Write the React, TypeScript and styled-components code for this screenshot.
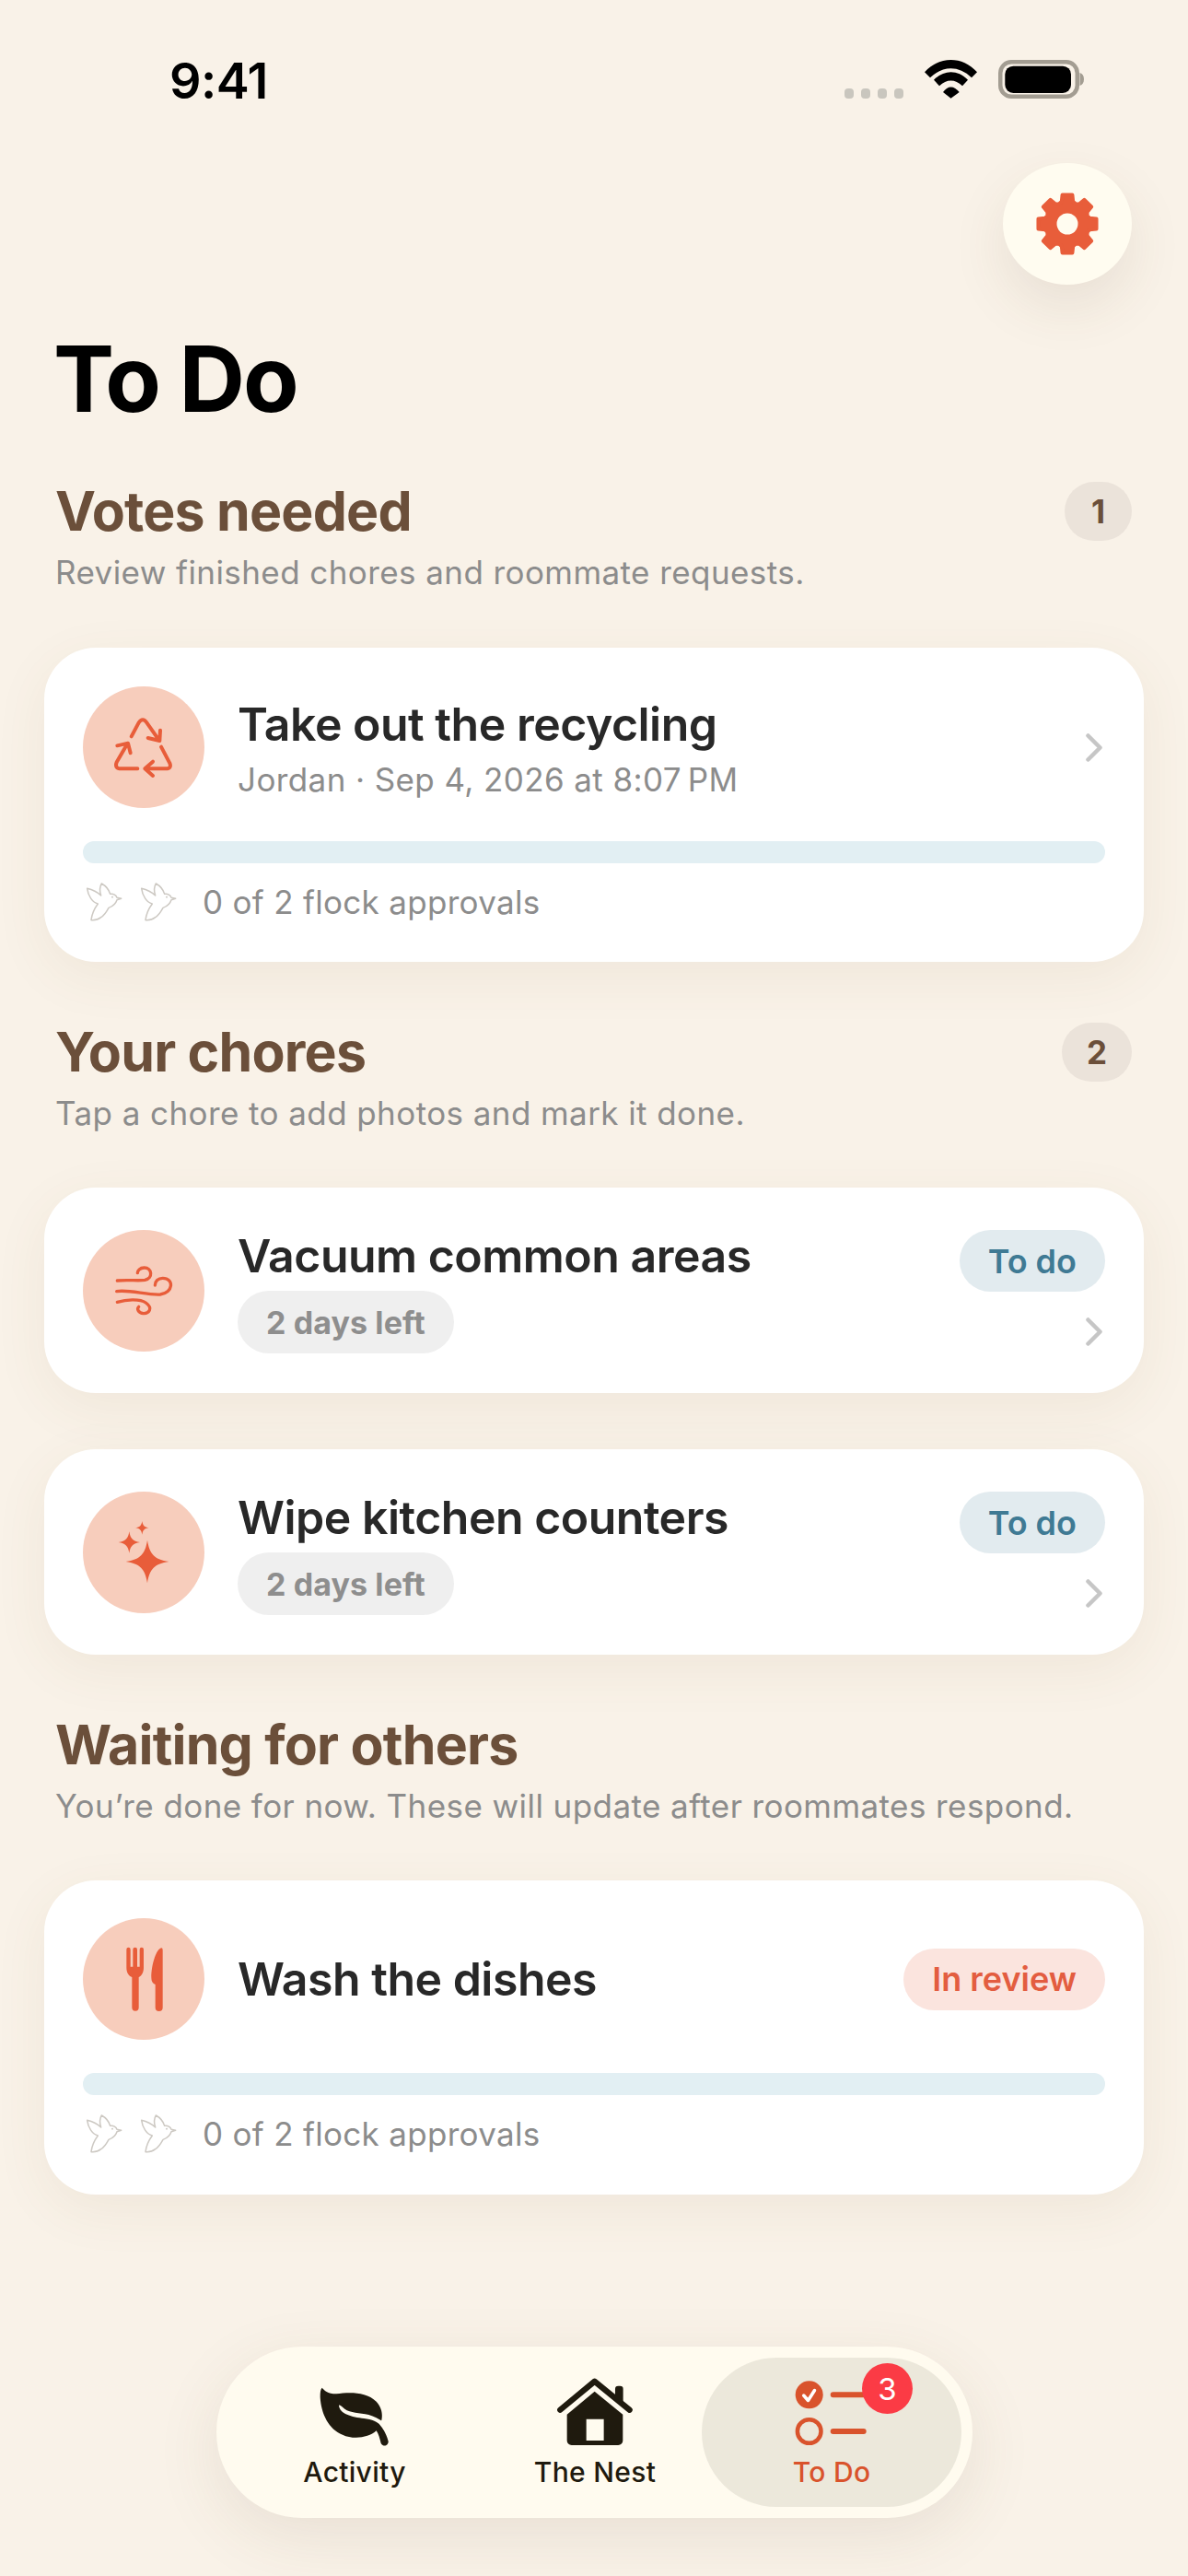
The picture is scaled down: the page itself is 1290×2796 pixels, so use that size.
import React from "react";
import styled, { createGlobalStyle } from "styled-components";

const Global = createGlobalStyle`
  html, body { margin: 0; padding: 0; background: #f9f2e8; }
  * { box-sizing: border-box; }
  body { font-family: Inter, "Noto Sans", sans-serif; -webkit-font-smoothing: antialiased; }
`;

const Page = styled.div`
  width: 1290px;
  height: 2796px;
  background: #f9f2e8;
  display: flex;
  flex-direction: column;
  overflow: hidden;
`;
const StatusBar = styled.div`
  height: 177px;
  flex: none;
  display: flex;
  justify-content: space-between;
  align-items: flex-start;
  padding: 59px 113px 0 184px;
`;
const Time = styled.div`
  font-size: 54px;
  line-height: 58px;
  font-weight: 600;
  color: #000;
  letter-spacing: -0.5px;
`;
const StatusIcons = styled.div`
  display: flex;
  align-items: flex-end;
  padding-top: 6px;
  gap: 23px;
`;
const Dots = styled.div`
  display: flex;
  gap: 7.5px;
`;
const Dot = styled.span`
  width: 10.5px;
  height: 11px;
  border-radius: 4px;
  background: #c9c6be;
`;
const TopRow = styled.div`
  display: flex;
  justify-content: flex-end;
  padding-right: 61px;
`;
const SettingsButton = styled.div`
  width: 140px;
  height: 132px;
  border-radius: 50%;
  background: #fffcf0;
  display: flex;
  align-items: center;
  justify-content: center;
  box-shadow: 0 24px 60px rgba(90, 70, 40, 0.1);
`;
const PageTitle = styled.h1`
  margin: 52px 0 0 58px;
  font-size: 99px;
  line-height: 100px;
  font-weight: 700;
  letter-spacing: -2px;
  color: #000;
`;
const Section = styled.section<{ $top: number }>`
  margin-top: ${(p) => p.$top}px;
  padding: 0 48px;
`;
const SectionHead = styled.div`
  display: flex;
  justify-content: space-between;
  align-items: center;
  padding: 0 13px 0 12px;
  height: 70px;
`;
const SectionTitle = styled.h2`
  margin: 0;
  font-size: 59px;
  line-height: 70px;
  font-weight: 700;
  letter-spacing: -0.8px;
  color: #6b4f3a;
`;
const CountBadge = styled.div`
  min-width: 73px;
  height: 64px;
  padding: 0 27px;
  border-radius: 32px;
  background: #ebe3da;
  color: #6b4f3a;
  font-size: 35px;
  font-weight: 700;
  display: flex;
  align-items: center;
  justify-content: center;
`;
const SectionSub = styled.p`
  margin: 9px 0 0;
  padding: 0 13px 0 12px;
  font-size: 35px;
  line-height: 44px;
  color: #8c8c8c;
  letter-spacing: 0.42px;
`;
const Card = styled.div<{ $top?: number; $pad: string }>`
  margin-top: ${(p) => p.$top ?? 60}px;
  padding: ${(p) => p.$pad};
  background: #fff;
  border-radius: 56px;
  box-shadow: 0 16px 60px rgba(110, 80, 40, 0.07);
`;
const Row = styled.div<{ $align?: string }>`
  display: flex;
  align-items: ${(p) => p.$align ?? "center"};
  gap: 36px;
`;
const IconCircle = styled.div`
  width: 132px;
  height: 132px;
  flex: none;
  border-radius: 50%;
  background: #f7cdbc;
  display: flex;
  align-items: center;
  justify-content: center;
`;
const Body = styled.div<{ $inset?: number }>`
  flex: 1;
  min-width: 0;
  padding-top: ${(p) => p.$inset ?? 0}px;
  display: flex;
  flex-direction: column;
  align-items: flex-start;
`;
const Title = styled.div`
  font-size: 50px;
  line-height: 56px;
  font-weight: 600;
  color: #282828;
  letter-spacing: -0.5px;
`;
const Subtitle = styled.div`
  margin-top: 10px;
  font-size: 35px;
  line-height: 44px;
  color: #8c8c8c;
  letter-spacing: 0.4px;
`;
const TimePill = styled.div`
  margin-top: 10px;
  height: 68px;
  padding: 0 31px;
  border-radius: 34px;
  background: #efefef;
  color: #8e8e8e;
  font-size: 34px;
  font-weight: 700;
  letter-spacing: 0.1px;
  display: flex;
  align-items: center;
`;
const Trailing = styled.div`
  flex: none;
  display: flex;
  flex-direction: column;
  align-items: flex-end;
  gap: 28px;
`;
const StatusPill = styled.div<{ $tone: "todo" | "review" }>`
  height: 67px;
  padding: 0 31px;
  border-radius: 34px;
  background: ${(p) => (p.$tone === "todo" ? "#e2ebef" : "#fbe4de")};
  color: ${(p) => (p.$tone === "todo" ? "#3f7a94" : "#e35d40")};
  font-size: 36px;
  font-weight: 600;
  display: flex;
  align-items: center;
`;
const ChevronBox = styled.div`
  margin-right: 3px;
  height: 31px;
  display: flex;
`;
const Progress = styled.div`
  margin-top: 36px;
  height: 24px;
  border-radius: 12px;
  background: #e2eff3;
`;
const Approvals = styled.div`
  margin-top: 20px;
  padding-left: 3px;
  display: flex;
  align-items: center;
  height: 44px;
`;
const Birds = styled.div`
  display: flex;
  gap: 19px;
  margin-right: 28px;
`;
const ApprovalText = styled.span`
  font-size: 35px;
  color: #8c8c8c;
  letter-spacing: 0.3px;
`;
const TabWrap = styled.div`
  margin-top: auto;
  padding-bottom: 63px;
  display: flex;
  justify-content: center;
`;
const TabBar = styled.nav`
  width: 821px;
  height: 186px;
  margin-left: 1px;
  border-radius: 93px;
  background: #fffbef;
  padding: 12px 12px 12px 16px;
  display: grid;
  grid-template-columns: 268px 254px 271px;
  box-shadow: 0 20px 70px rgba(90, 70, 40, 0.1);
`;
const Tab = styled.div<{ $active?: boolean }>`
  position: relative;
  border-radius: 81px;
  margin-left: ${(p) => (p.$active ? "-11px" : "0")};
  background: ${(p) => (p.$active ? "#ece8db" : "transparent")};
  color: ${(p) => (p.$active ? "#d9532c" : "#1f1a0e")};
  display: flex;
  flex-direction: column;
  align-items: center;
  font-size: 30px;
  font-weight: 500;
  letter-spacing: 0.3px;
  line-height: 36px;
`;
const TabIcon = styled.div`
  height: 106px;
  display: flex;
  align-items: flex-end;
  padding-bottom: 10px;
`;
const TabBadge = styled.div`
  position: absolute;
  left: 174px;
  top: 6px;
  width: 55px;
  height: 55px;
  border-radius: 50%;
  background: #fb3b45;
  color: #fff;
  font-size: 33px;
  font-weight: 400;
  display: flex;
  align-items: center;
  justify-content: center;
`;

const OR = "#e85d3a";

const gearPath = () => {
  const c = 34;
  const teeth = 8;
  let d = "";
  for (let i = 0; i < teeth; i++) {
    const a = (i / teeth) * Math.PI * 2 - Math.PI / 2;
    const pts: [number, number][] = [
      [23.5, a - Math.PI / 8],
      [25, a - 0.25],
      [32, a - 0.17],
      [32, a + 0.17],
      [25, a + 0.25],
    ];
    pts.forEach(([r, t]) => {
      d += `${d ? "L" : "M"}${(c + r * Math.cos(t)).toFixed(2)} ${(c + r * Math.sin(t)).toFixed(2)}`;
    });
  }
  return d + "Z";
};

const Gear = () => (
  <svg width="68" height="68" viewBox="0 0 68 68">
    <path d={gearPath()} fill={OR} stroke={OR} strokeWidth="4" strokeLinejoin="round" />
    <circle cx="34" cy="34" r="11.500" fill="#fffcf0" />
  </svg>
);

const Wifi = () => (
  <svg width="57" height="42" viewBox="0 0 57 42">
    <path d="M0 13.300C16-4.400 41-4.400 57 13.300L51 19.300C37 6 20 6 6 19.300Z" fill="#000" />
    <path d="M10 21.700C21 10.500 36 10.500 47 21.700L41 28.300C33 20.500 24 20.500 16 28.300Z" fill="#000" />
    <path d="M20 35C25 27.500 32 27.500 37.700 35L28.500 41.700Z" fill="#000" />
  </svg>
);

const Battery = () => (
  <svg width="93" height="42" viewBox="0 0 93 42">
    <rect x="2.250" y="2.250" width="83.500" height="37.500" rx="12" fill="none" stroke="#a39d92" strokeWidth="4.500" />
    <rect x="7.300" y="6.700" width="71.700" height="29.300" rx="9" fill="#000" />
    <path d="M88.500 14c3 1 4.500 3.500 4.500 7s-1.500 6-4.500 7z" fill="#a39d92" />
  </svg>
);

const Chevron = () => (
  <svg width="18" height="31" viewBox="0 0 18 31" fill="none">
    <path d="M2.500 2.500L15.500 15.500L2.500 28.500" stroke="#c6c6c6" strokeWidth="4.500" strokeLinecap="round" strokeLinejoin="round" />
  </svg>
);

const RecycleIcon = () => (
  <svg width="132" height="132" viewBox="180 135 396 396" fill="none" stroke={OR} strokeWidth="12" strokeLinecap="round" strokeLinejoin="round">
    <path d="M338 298L362 253Q375 235 388 253L428 310M392 303L430 312L432 278" />
    <path d="M435 332L463 385Q470 403 450 403H385M408 380L382 403L408 426" />
    <path d="M358 403H305Q282 403 290 382L325 322M292 328L327 320L335 352" />
  </svg>
);

const WindIcon = () => (
  <svg width="132" height="132" viewBox="180 165 396 396" fill="none" stroke={OR} strokeWidth="10" strokeLinecap="round">
    <path d="M292 330C330 326 360 332 382 328C410 322 405 288 380 288C365 288 358 298 358 305" />
    <path d="M290 365C330 358 390 378 432 375C475 370 478 322 440 322C425 322 415 332 415 345" />
    <path d="M292 400C320 392 365 388 385 402C410 420 395 438 377 437C360 435 355 422 362 415" />
  </svg>
);

const star = (cx: number, cy: number, r: number) => {
  const k = r * 0.17;
  return `M${cx} ${cy - r}C${cx + k * 0.6} ${cy - k * 2} ${cx + k * 2} ${cy - k * 0.6} ${cx + r} ${cy}C${cx + k * 2} ${cy + k * 0.6} ${cx + k * 0.6} ${cy + k * 2} ${cx} ${cy + r}C${cx - k * 0.6} ${cy + k * 2} ${cx - k * 2} ${cy + k * 0.6} ${cx - r} ${cy}C${cx - k * 2} ${cy - k * 0.6} ${cx - k * 0.6} ${cy - k * 2} ${cx} ${cy - r}Z`;
};

const SparkleIcon = () => (
  <svg width="132" height="132" viewBox="180 1017 396 396" fill={OR}>
    <path d={star(390, 1245, 70)} />
    <path d={star(331, 1182, 35)} />
    <path d={star(373, 1135, 22)} />
  </svg>
);

const ForkIcon = () => (
  <svg width="70" height="90" viewBox="3 -3 210 270" fill={OR}>
    <path d="M52 36a6.500 6.500 0 0 1 13 0V92h8V36a7 7 0 0 1 14 0V92h8V36a6.500 6.500 0 0 1 13 0V95C108 112 100 122 92 126V225a11 11 0 0 1-22 0V126C60 122 52 112 52 95Z" />
    <path d="M162 32C148 40 133 85 133 128C133 140 138 146 146 150V225a12 12 0 0 0 24 0V38C170 30 166 29 162 32Z" />
  </svg>
);

const Bird = () => (
  <svg width="40" height="44" viewBox="10 20 120 132" fill="#fff" stroke="#cdc9c3" strokeWidth="4.500" strokeLinejoin="round" strokeLinecap="round">
    <path d="M60 65C55 50 56 36 62 26C76 34 86 46 90 60C100 58 110 64 112 72L126 75L112 79C108 92 98 100 85 105C78 118 70 130 60 136C50 144 38 146 28 145C30 128 38 108 50 92C32 88 18 66 15 42C32 46 48 54 60 65Z" />
    <circle cx="97" cy="70" r="2.500" fill="#c0bcb5" stroke="none" />
  </svg>
);

const LeafIcon = () => (
  <svg width="76" height="65" viewBox="30 50 228 195">
    <path d="M38 55C45 62 55 75 85 75C120 70 180 65 215 100C235 122 235 145 232 160L226 175C232 182 236 188 240 195C246 206 250 215 253 226A12 12 0 0 1 230 236C226 220 222 205 215 195C190 218 140 225 105 208C60 190 35 140 32 85C32 70 33 60 38 55Z" fill="#1f1a0e" />
    <path d="M93 112C98 110 104 118 112 124C130 138 160 135 190 143C208 148 222 156 240 168L234 183C220 165 200 158 175 155C135 150 95 140 93 112Z" fill="#fffbef" />
  </svg>
);

const HouseIcon = () => (
  <svg width="82.300" height="73.700" viewBox="788 36 247 221">
    <path d="M910 80L820 155V240A15 15 0 0 0 835 255H987A15 15 0 0 0 1002 240V155ZM883 170H940V240H883Z" fill="#1f1a0e" fillRule="evenodd" />
    <path d="M798 140L910 47L1024 140" fill="none" stroke="#1f1a0e" strokeWidth="19" strokeLinecap="round" strokeLinejoin="round" />
    <path d="M977 100V72A10 10 0 0 1 987 62H993A10 10 0 0 1 1003 72V122L977 100Z" fill="#1f1a0e" />
  </svg>
);

const TodoIcon = () => (
  <svg width="80" height="72" viewBox="863 2583 80 72" fill="none">
    <circle cx="878.700" cy="2599.300" r="15" fill="#d9532c" />
    <path d="M872.700 2600L877.500 2605.500L884.500 2594.500" stroke="#fff" strokeWidth="3.500" strokeLinecap="round" strokeLinejoin="round" />
    <path d="M904.700 2599.300H938M904.700 2639H937.700" stroke="#d9532c" strokeWidth="6" strokeLinecap="round" />
    <circle cx="878.700" cy="2639" r="12.800" stroke="#d9532c" strokeWidth="4.500" />
  </svg>
);

const Approval = () => (
  <>
    <Progress />
    <Approvals>
      <Birds>
        <Bird />
        <Bird />
      </Birds>
      <ApprovalText>0 of 2 flock approvals</ApprovalText>
    </Approvals>
  </>
);

const ChoreCard = ({ icon, title, top }: { icon: React.ReactNode; title: string; top: number }) => (
  <Card $top={top} $pad="46px 42px 43px">
    <Row $align="flex-start">
      <IconCircle>{icon}</IconCircle>
      <Body>
        <Title>{title}</Title>
        <TimePill>2 days left</TimePill>
      </Body>
      <Trailing>
        <StatusPill $tone="todo">To do</StatusPill>
        <ChevronBox>
          <Chevron />
        </ChevronBox>
      </Trailing>
    </Row>
  </Card>
);

export default function App() {
  return (
    <Page>
      <Global />
      <StatusBar>
        <Time>9:41</Time>
        <StatusIcons>
          <Dots>
            <Dot />
            <Dot />
            <Dot />
            <Dot />
          </Dots>
          <Wifi />
          <Battery />
        </StatusIcons>
      </StatusBar>
      <TopRow>
        <SettingsButton>
          <Gear />
        </SettingsButton>
      </TopRow>
      <PageTitle>To Do</PageTitle>

      <Section $top={59}>
        <SectionHead>
          <SectionTitle>Votes needed</SectionTitle>
          <CountBadge>1</CountBadge>
        </SectionHead>
        <SectionSub>Review finished chores and roommate requests.</SectionSub>
        <Card $pad="42px 42px 43px">
          <Row>
            <IconCircle>
              <RecycleIcon />
            </IconCircle>
            <Body $inset={4}>
              <Title>Take out the recycling</Title>
              <Subtitle>Jordan · Sep 4, 2026 at 8:07{"\u202f"}PM</Subtitle>
            </Body>
            <ChevronBox>
              <Chevron />
            </ChevronBox>
          </Row>
          <Approval />
        </Card>
      </Section>

      <Section $top={63}>
        <SectionHead>
          <SectionTitle>Your chores</SectionTitle>
          <CountBadge>2</CountBadge>
        </SectionHead>
        <SectionSub>Tap a chore to add photos and mark it done.</SectionSub>
        <ChoreCard top={59} icon={<WindIcon />} title="Vacuum common areas" />
        <ChoreCard top={61} icon={<SparkleIcon />} title="Wipe kitchen counters" />
      </Section>

      <Section $top={63}>
        <SectionHead>
          <SectionTitle>Waiting for others</SectionTitle>
        </SectionHead>
        <SectionSub>You’re done for now. These will update after roommates respond.</SectionSub>
        <Card $top={59} $pad="41px 42px 44px">
          <Row>
            <IconCircle>
              <ForkIcon />
            </IconCircle>
            <Body>
              <Title>Wash the dishes</Title>
            </Body>
            <StatusPill $tone="review">In review</StatusPill>
          </Row>
          <Approval />
        </Card>
      </Section>

      <TabWrap>
        <TabBar>
          <Tab>
            <TabIcon>
              <LeafIcon />
            </TabIcon>
            Activity
          </Tab>
          <Tab>
            <TabIcon>
              <HouseIcon />
            </TabIcon>
            The Nest
          </Tab>
          <Tab $active>
            <TabIcon>
              <TodoIcon />
            </TabIcon>
            To Do
            <TabBadge>3</TabBadge>
          </Tab>
        </TabBar>
      </TabWrap>
    </Page>
  );
}
